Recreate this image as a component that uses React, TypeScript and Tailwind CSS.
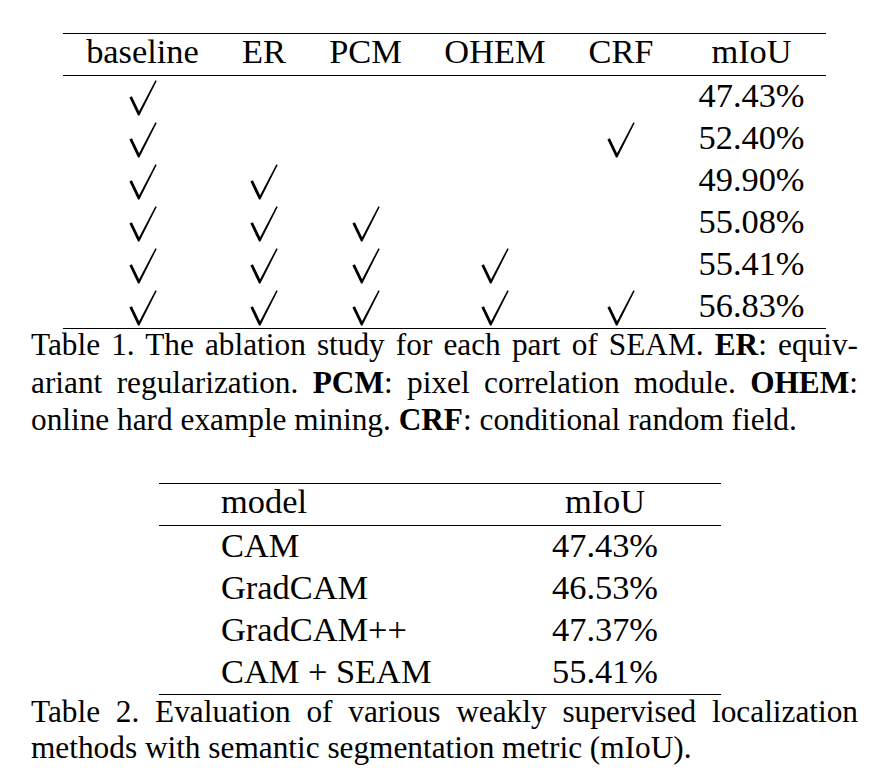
import React from "react";

const rows: [number, number, number, number, number, string][] = [
  [1, 0, 0, 0, 0, "47.43%"],
  [1, 0, 0, 0, 1, "52.40%"],
  [1, 1, 0, 0, 0, "49.90%"],
  [1, 1, 1, 0, 0, "55.08%"],
  [1, 1, 1, 1, 0, "55.41%"],
  [1, 1, 1, 1, 1, "56.83%"],
];

const models = [
  ["CAM", "47.43%"],
  ["GradCAM", "46.53%"],
  ["GradCAM++", "47.37%"],
  ["CAM + SEAM", "55.41%"],
];

// TeX style \surd: thick short left arm, thin long right arm
function Check() {
  return (
    <svg width="28" height="36" viewBox="0 0 28 36" className="mt-[4px]">
      <path d="M0.4 17.6 L2.9 16.3 L10.1 31.2 L26.4 0.2 L27.7 0.9 L10.4 35.6 L9 35.6 Z" fill="#000" />
    </svg>
  );
}

const Rule = ({ className = "" }: { className?: string }) => <div className={`h-px bg-black ${className}`} />;

export default function App() {
  return (
    <div className="min-h-screen w-[878px] bg-white pt-[33px] text-black font-['Liberation_Serif','Times_New_Roman',serif]">
      {/* Table 1 */}
      <div className="ml-[63px] w-[763px]">
        <Rule />
        <div className="grid grid-cols-[159px_84px_119px_140px_112px_149px] text-center text-[34.4px] leading-[35px] pb-[6px]">
          <div>baseline</div>
          <div>ER</div>
          <div>PCM</div>
          <div>OHEM</div>
          <div>CRF</div>
          <div>mIoU</div>
        </div>
        <Rule />
        {rows.map((r, i) => (
          <div key={i} className="grid h-[42px] grid-cols-[159px_84px_119px_140px_112px_149px] text-[34.4px] leading-[39px]">
            {r.slice(0, 5).map((v, j) => (
              <div key={j} className="flex justify-center items-start">
                {v ? <Check /> : null}
              </div>
            ))}
            <div className="text-center">{r[5]}</div>
          </div>
        ))}
        <Rule />
      </div>

      <div className="ml-[31px] mt-[-3px] w-[827px] text-[31.3px] leading-[37.5px]">
        <div className="text-justify [text-align-last:justify]">
          Table 1. The ablation study for each part of SEAM. <b>ER</b>: equiv-
        </div>
        <div className="text-justify [text-align-last:justify]">
          ariant regularization. <b>PCM</b>: pixel correlation module. <b>OHEM</b>:
        </div>
        <div>
          online hard example mining. <b>CRF</b>: conditional random field.
        </div>
      </div>

      {/* Table 2 */}
      <div className="ml-[159px] mt-[44px] w-[562px]">
        <Rule />
        <div className="grid grid-cols-[330px_232px] text-[34.4px] leading-[35px] pb-[6px]">
          <div className="pl-[62px]">model</div>
          <div className="text-center">mIoU</div>
        </div>
        <Rule />
        {models.map(([m, v]) => (
          <div key={m} className="grid h-[42px] grid-cols-[330px_232px] text-[34.4px] leading-[39px]">
            <div className="pl-[62px]">{m}</div>
            <div className="text-center">{v}</div>
          </div>
        ))}
        <Rule />
      </div>

      <div className="ml-[31px] mt-[-1px] w-[827px] text-[31.3px] leading-[36.6px]">
        <div className="text-justify [text-align-last:justify]">
          Table 2. Evaluation of various weakly supervised localization
        </div>
        <div>methods with semantic segmentation metric (mIoU).</div>
      </div>
    </div>
  );
}
